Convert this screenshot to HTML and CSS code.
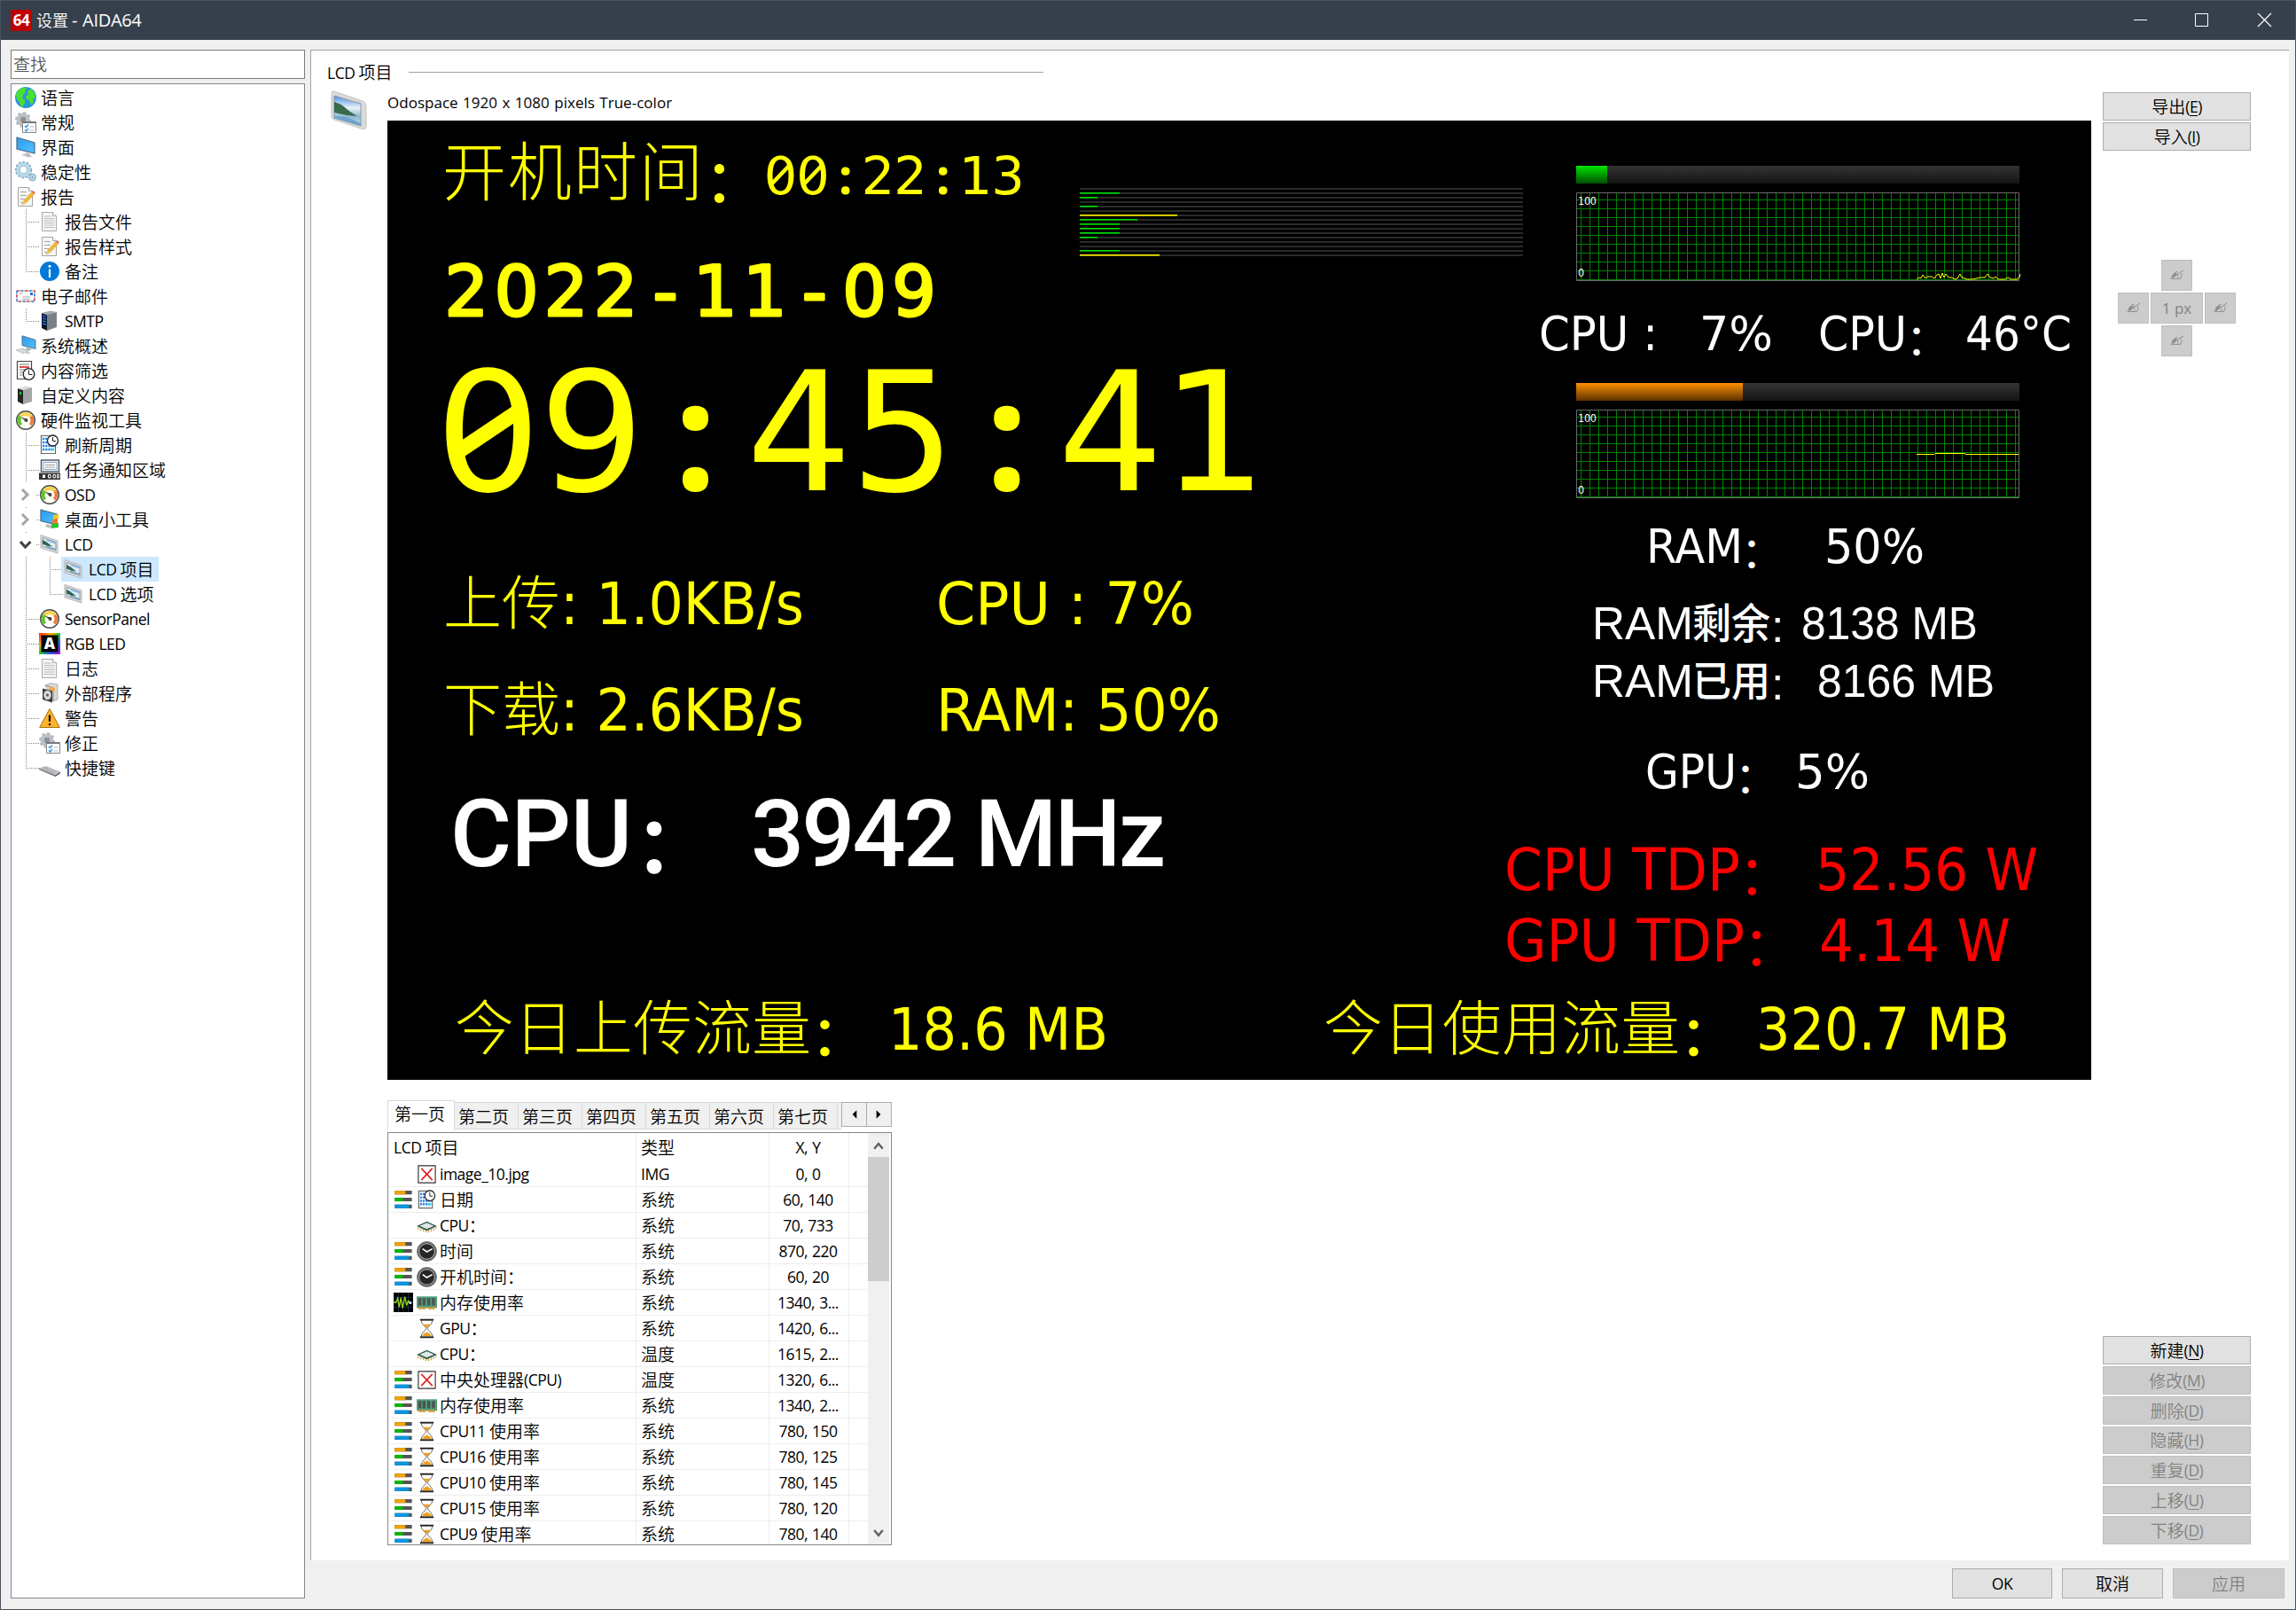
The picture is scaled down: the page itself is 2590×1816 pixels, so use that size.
FILE: index.html
```html
<!DOCTYPE html>
<html lang="zh-CN">
<head>
<meta charset="utf-8">
<title>设置 - AIDA64</title>
<link rel="stylesheet" href="styles.css">
</head>
<body>
<svg class="defs" width="0" height="0">
<defs>
<linearGradient id="gTrack" x1="0" y1="0" x2="0" y2="1"><stop offset="0" stop-color="#343434"/><stop offset="1" stop-color="#141414"/></linearGradient>
<linearGradient id="gGreen" x1="0" y1="0" x2="0" y2="1"><stop offset="0" stop-color="#00e400"/><stop offset="1" stop-color="#005000"/></linearGradient>
<linearGradient id="gOrange" x1="0" y1="0" x2="0" y2="1"><stop offset="0" stop-color="#ff9000"/><stop offset="1" stop-color="#5a3200"/></linearGradient>
<linearGradient id="gRain" x1="0" y1="0" x2="1" y2="1"><stop offset="0" stop-color="#f22"/><stop offset=".3" stop-color="#fa0"/><stop offset=".5" stop-color="#2c2"/><stop offset=".7" stop-color="#26f"/><stop offset="1" stop-color="#a0c"/></linearGradient>
<linearGradient id="gBlue" x1="0" y1="0" x2="1" y2="1"><stop offset="0" stop-color="#2b9cf0"/><stop offset="1" stop-color="#55c0ff"/></linearGradient>
<linearGradient id="gSky" x1="0" y1="0" x2="0" y2="1"><stop offset="0" stop-color="#4a8fe8"/><stop offset=".4" stop-color="#e8f2fb"/><stop offset=".7" stop-color="#8db8d4"/><stop offset="1" stop-color="#c8e0ee"/></linearGradient>
<pattern id="grid" width="10" height="10" patternUnits="userSpaceOnUse"><path d="M5.5 0V10M0 8.5H10" stroke="#008200" fill="none"/></pattern>
<symbol id="globe" viewBox="0 0 24 24"><circle cx="12" cy="12" r="12" fill="#2a97d8"/><path d="M3 4 8 1l5 0-2 3 1 2-3 3-1 4 3 2v3l-3 5-1 0-2-6-3-3-1-5zM14 5l4-3 4 5 1 5-3 1 1 4-3 3-2-5-3-1-1-3 3-2z" fill="#4de02b"/></symbol>
<symbol id="gearlist" viewBox="0 0 24 24"><circle cx="9" cy="9" r="5.500" fill="none" stroke="#bcc1c6" stroke-width="4"/><circle cx="9" cy="9" r="7.800" fill="none" stroke="#b4b9be" stroke-width="2.200" stroke-dasharray="3.200 2.900"/><circle cx="9" cy="9" r="3.400" fill="#8b9198"/><path d="M8.500 11.500h15v12h-15z" fill="#fff" stroke="#858585"/><path d="M8.500 12h15" stroke="#777" stroke-width="2"/><path d="M11 16l1.500 1.500 2.500-3M11 20.500l1.500 1.500 2.500-3" fill="none" stroke="#1a8ff0" stroke-width="1.300"/><path d="M16.500 17h5M16.500 21h5" stroke="#bbb"/></symbol>
<symbol id="monitor" viewBox="0 0 24 24"><path d="M2 1 22 7v12L2 14z" fill="url(#gBlue)" stroke="#4a6b85" stroke-width="1.200"/><path d="M12 18l5 1.500v2l3 1-5 1-8-3 5-1z" fill="#b8bdc2"/></symbol>
<symbol id="gears" viewBox="0 0 24 24"><circle cx="9.500" cy="9.500" r="6.500" fill="none" stroke="#b8d9ea" stroke-width="4.500"/><circle cx="9.500" cy="9.500" r="8.900" fill="none" stroke="#7da5bd" stroke-width="1.500" stroke-dasharray="2.500 2"/><circle cx="9.500" cy="9.500" r="4.200" fill="#fff" stroke="#89aabd" stroke-width=".8"/><circle cx="19.500" cy="18" r="3" fill="#fff" stroke="#9ec3d8" stroke-width="2"/><circle cx="19.500" cy="18" r="4.300" fill="none" stroke="#6b93ab" stroke-width="1" stroke-dasharray="1.500 1.500"/><circle cx="19.500" cy="18" r="1.200" fill="#6b93ab"/></symbol>
<symbol id="doc" viewBox="0 0 24 24"><path d="M3.500 1.500h12l4 4v17h-16z" fill="#f4f4f2" stroke="#a9a9a7"/><path d="M15.500 1.500v4h4" fill="#fff" stroke="#a9a9a7"/><path d="M5.500 6h8M5.500 8.500h12M5.500 11h12M5.500 13.500h12M5.500 16h12M5.500 18.500h12" stroke="#bdbdbb"/></symbol>
<symbol id="report" viewBox="0 0 24 24"><path d="M3.500 1.500h12l4 4v17h-16z" fill="#f6f6f4" stroke="#a3a3a1"/><path d="M15.500 1.500v4h4" fill="#fff" stroke="#a3a3a1"/><path d="M6 6.500h7M6 10.500h7M6 14.500h5M6 18.500h4" stroke="#a5a5a3"/><path d="M8 21l1.500-4L19 6.500l2.500 2.500L12 19z" fill="#f5bb2d" stroke="#c58a18" stroke-width=".6"/><path d="M8 21l1.500-4 2.500 2z" fill="#e8cfa0"/><path d="M19 6.500l1.500-1.500 2.500 2.300-1.500 1.700z" fill="#e86a6a"/></symbol>
<symbol id="info" viewBox="0 0 24 24"><circle cx="12" cy="12" r="11" fill="#0078d7"/><circle cx="12" cy="6.200" r="1.500" fill="#fff"/><path d="M12 9.500v9.500" stroke="#fff" stroke-width="2.200"/></symbol>
<symbol id="mail" viewBox="0 0 24 24"><path d="M2 6h20v12H2z" fill="#fafafa" stroke="#999" stroke-width="1"/><path d="M2 6h20v12H2z" fill="none" stroke="#e33c3c" stroke-width="1.600" stroke-dasharray="2.500 7"/><path d="M2 6h20v12H2z" fill="none" stroke="#2f7fe0" stroke-width="1.600" stroke-dasharray="2.500 7" stroke-dashoffset="-4.500"/><path d="M17 8h3v3h-3z" fill="#2f6fd0"/><path d="M4.500 9h4M9 13h8M8 15.500h9" stroke="#aaa"/></symbol>
<symbol id="server" viewBox="0 0 24 24"><path d="M3 3 9 5v18l-6-3z" fill="#0d1524"/><path d="M3 3 13 .5 20 2 9 5z" fill="#a5a9b0"/><path d="M9 5 20 2v17L9 23z" fill="#7b7f88"/><path d="M4 6l4 1M4 9l4 1M4 12l4 1M4 15l4 1" stroke="#1c6fe8" stroke-width="1.400"/></symbol>
<symbol id="pc" viewBox="0 0 24 24"><path d="M8 .8 23 5.500v10L8 11.500z" fill="url(#gBlue)" stroke="#54748c"/><path d="M14 14l5 2-3 1.500-5-1.500z" fill="#a9afb5"/><path d="M1 17l7-2 7 3-6 2.500z" fill="#d8dbde" stroke="#aab0b5" stroke-width=".7"/><path d="M11 20l4-1 3 1-4 1.500z" fill="#c3c8cc"/></symbol>
<symbol id="filter" viewBox="0 0 24 24"><path d="M2.500 1.500h16v20h-16z" fill="#fff" stroke="#444" stroke-width="1.200"/><path d="M5 5h11" stroke="#777"/><path d="M5 8h11" stroke="#d02020" stroke-width="1.600"/><path d="M5 11h7M5 14h4M5 17h3" stroke="#777"/><circle cx="15.500" cy="16" r="6.300" fill="#fff" stroke="#222" stroke-width="1.300"/><path d="M15.500 11.500V16.500h4" fill="none" stroke="#222"/></symbol>
<symbol id="custom" viewBox="0 0 24 24"><path d="M3 4 9 6v16l-6-3z" fill="#262626"/><path d="M3 4 12 1.500 19 3 9 6z" fill="#dcdcdc"/><path d="M9 6 19 3v16L9 22z" fill="#a5a5a5"/><path d="M6 8v3" stroke="#18d038" stroke-width="2"/></symbol>
<symbol id="gauge" viewBox="0 0 24 24"><circle cx="12" cy="12" r="10.300" fill="#fffdf3" stroke="#4a4a4a" stroke-width="1.400"/><path d="M4.500 6.500A9.200 9.200 0 0 1 19.500 6.500L16.500 9a6 6 0 0 0-9 0z" fill="#f7d354"/><path d="M4.500 6.500A9.200 9.200 0 0 0 5.500 18.500L8 16a6 6 0 0 1-.5-7z" fill="#5cc72e"/><path d="M19.500 6.500A9.200 9.200 0 0 1 18.500 18.500L16 16a6 6 0 0 0 .5-7z" fill="#ee7b3b"/><path d="M6 8.500l8 2.500-1 2.500z" fill="#333"/><circle cx="12.500" cy="12" r="2" fill="#444"/></symbol>
<symbol id="cal" viewBox="0 0 24 24"><path d="M2.500 1.500h16v20h-16z" fill="#fff" stroke="#666" stroke-width="1.200"/><path d="M4 5h8M4 9h8M4 13h13M4 17h13" stroke="#2b86e8" stroke-width="2.600" stroke-dasharray="2.300 .9"/><path d="M13 17h4M16 13h2" stroke="#35d0ee" stroke-width="2.600"/><circle cx="15.500" cy="7" r="6" fill="#fff" stroke="#222" stroke-width="1.300"/><path d="M15.500 3v4.500h3.500" fill="none" stroke="#222"/></symbol>
<symbol id="tray" viewBox="0 0 24 24"><path d="M2.500 1h20v13h-20z" fill="#eef2f6" stroke="#56606c" stroke-width="1.500"/><path d="M5 3.500h15v8H5z" fill="#fff" stroke="#8ba4c4"/><path d="M7 6.500h11M7 9h11" stroke="#999"/><path d="M0 15.500h24V23H0z" fill="#333"/><path d="M4 17.500h3v3.500H4z" fill="#fff"/><path d="M10.500 17.500h2.500v3.500h-2.500zM16 17.500h2.300v3.500H16zM20.500 17.500h2v3.500h-2z" fill="none" stroke="#fff"/></symbol>
<symbol id="gadget" viewBox="0 0 24 24"><path d="M2 1 20 6v12L2 13.500z" fill="url(#gBlue)" stroke="#4a6b85" stroke-width="1.200"/><path d="M9 17l6 2-2 3-6-2z" fill="#b8bdc2"/><path d="M16 7l6-1v5l-6 1z" fill="#f2c81e"/><path d="M15 12l6-1v5l-6 1z" fill="#f0782c"/><path d="M14 17l8-1v5l-8 1z" fill="#25c52f"/></symbol>
<symbol id="lcd" viewBox="0 0 24 24"><path d="M2 1.500 21 8v14L2 16z" fill="#dcdcdc" stroke="#b5b5b5"/><path d="M4 4.500 19 9.500v9.500L4 14z" fill="#dcebf5" stroke="#7d8894" stroke-width=".8"/><path d="M9 6.200l10 3.300v2L9 8z" fill="#7fb2e8"/><path d="M4 7l4 2 7 5.500-5-.5-6-2.500z" fill="#2e6350"/><path d="M8 14.500l11 3" stroke="#5d93b5" stroke-width="1.200"/></symbol>
<symbol id="rgb" viewBox="0 0 24 24"><path d="M0 0h24v24H0z" fill="url(#gRain)"/><path d="M2.500 2.500h19v19h-19z" fill="#000"/></symbol>
<symbol id="box" viewBox="0 0 24 24"><path d="M7 3 13 .5 21 2v17l-5 2z" fill="#d9d9d6" stroke="#999" stroke-width=".7"/><path d="M7 3l9 3v15" fill="none" stroke="#8a8a88"/><circle cx="14.500" cy="8" r="3.500" fill="#f2a64e"/><path d="M4 6.500 15 9.500v13L4 19z" fill="#3b3f44"/><ellipse cx="9.500" cy="14" rx="4.300" ry="5.200" fill="#d4d9de"/><circle cx="9.500" cy="14" r="1.500" fill="#555"/></symbol>
<symbol id="warn" viewBox="0 0 24 24"><path d="M12 1.500 23.300 22.500H.7z" fill="#fcb42c" stroke="#a56f0c" stroke-linejoin="round"/><path d="M12 8.500v7.500M12 18v2.300" stroke="#111" stroke-width="2.200"/></symbol>
<symbol id="keys" viewBox="0 0 24 24"><path d="M0 13l8-2.500L24 17l-6 3.500z" fill="#c5c7ca" stroke="#9a9da0" stroke-width=".6"/><path d="M18 20.500 24 17v1.500L18.500 22 0 14v-1z" fill="#5a5e62"/><path d="M4 13l13 5.500M6.500 12l13 5.500" stroke="#8c9094" stroke-dasharray="1.500 1"/></symbol>
<symbol id="bars" viewBox="0 0 24 24"><path d="M1.500 3.500h21M1.500 12h21M1.500 20.500h21" stroke="#555" stroke-width="4.600"/><path d="M1.500 3.500h13" stroke="#f0a30a" stroke-width="4.600"/><path d="M1.500 12h10" stroke="#0cb40c" stroke-width="4.600"/><path d="M1.500 20.500h17.500" stroke="#0a95e0" stroke-width="4.600"/></symbol>
<symbol id="ximg" viewBox="0 0 24 24"><path d="M2 2h20v20H2z" fill="#fff" stroke="#333" stroke-width="1.200"/><path d="M5.500 5l13 14M18.500 5 5.500 19" stroke="#e02828" stroke-width="1.800"/></symbol>
<symbol id="chip" viewBox="0 0 24 24"><path d="M2 14v3M5 15v3M8 16v3M11 17v3M14 17v3M17 16v3M20 15v3M22.500 14v2" stroke="#c9a24a" stroke-width="1.300"/><path d="M0 12.500 12 7l12 5.500L12 18z" fill="#2e5b49"/><path d="M3.500 12.200 12 8.500l8.500 3.700-8.500 3.600z" fill="#e2e6e4"/></symbol>
<symbol id="clock" viewBox="0 0 24 24"><circle cx="12" cy="12" r="11.300" fill="#2c2c2c" stroke="#8a8a8a" stroke-width="1.200"/><circle cx="12" cy="12" r="9.300" fill="#262626" stroke="#b5b5b5" stroke-width="1.200"/><path d="M7 9l5 3.500L18.500 9" fill="none" stroke="#fff" stroke-width="1.600"/></symbol>
<symbol id="graph" viewBox="0 0 24 24"><path d="M0 0h24v24H0z" fill="#000"/><path d="M0 6h24M0 12h24M0 18h24M6 0v24M12 0v24M18 0v24" stroke="#16324a"/><path d="M0 12h3l2-5 2 11 2-12 2 13 3-14 2 11 2-6 2 2h2" fill="none" stroke="#9ad81e" stroke-width="1.400"/><circle cx="20.500" cy="12.500" r="1.700" fill="#bfe8ff"/></symbol>
<symbol id="ram" viewBox="0 0 24 24"><path d="M0 4.500h24V18H0z" fill="#4f9e78"/><path d="M2 6.500h3.500v8.500H2zM7 6.500h3.500v8.500H7zM12.500 6.500H16v8.500h-3.500zM18 6.500h3.500v8.500H18z" fill="#4c5254"/><path d="M2 17h9v2.500H2zM13.500 17h8v2.500h-8z" fill="#d29a3e"/></symbol>
<symbol id="glass" viewBox="0 0 24 24"><path d="M5.500 2c0 6 5.500 7 5.500 10s-5.500 4-5.500 10h13c0-6-5.500-7-5.500-10s5.500-4 5.500-10z" fill="#fff" stroke="#555"/><path d="M7.500 7h9L12 11.500zM6.500 21c1-3 4-3.500 5.500-5 1.500 1.500 4.500 2 5.500 5z" fill="#eda21c"/><path d="M4 1.700h16M4 22.300h16" stroke="#222" stroke-width="2"/></symbol>
<symbol id="hand" viewBox="0 0 18 14"><path d="M1.500 11.500 16 2M3 8l4-4 2.500-.5" fill="none" stroke="#8a8a86"/><path d="M3 11.500h9.500l1.500-3.500-.5-2.500M8.500 7l2 1.500M9 9.500l1.500 1" fill="none" stroke="#93938f"/><path d="M2.500 10l1.500-3 4-2.500.5 1.500-3 4.500z" fill="#8e8e8a"/></symbol>
</defs>
</svg>

<div class="window">
<header class="titlebar">
<div class="appicon">64</div><div class="title">设置 <span class="en">- AIDA64</span></div>
<svg class="winctl" width="160" height="44" viewBox="0 0 160 44" fill="none" stroke="#fff"><path d="M4 21.500h15M73.500 14.500h14v14h-14z"/><path d="M144 14l15 15M159 14l-15 15" stroke-width="1.200"/></svg>
</header>
<div class="body">
<aside class="side">
<div class="search">查找</div>
<div class="tree">
<div class="row"><div class="label"><svg><use href="#globe"/></svg>语言</div></div>
<div class="row"><div class="label"><svg><use href="#gearlist"/></svg>常规</div></div>
<div class="row"><div class="label"><svg><use href="#monitor"/></svg>界面</div></div>
<div class="row"><div class="label"><svg><use href="#gears"/></svg>稳定性</div></div>
<div class="row"><div class="label"><svg><use href="#report"/></svg>报告</div></div>
<div class="row"><i class="g v h"></i><div class="label"><svg><use href="#doc"/></svg>报告文件</div></div>
<div class="row"><i class="g v h"></i><div class="label"><svg><use href="#report"/></svg>报告样式</div></div>
<div class="row"><i class="g v h last"></i><div class="label"><svg><use href="#info"/></svg>备注</div></div>
<div class="row"><div class="label"><svg><use href="#mail"/></svg>电子邮件</div></div>
<div class="row"><i class="g v h last"></i><div class="label"><svg><use href="#server"/></svg><span class="en">SMTP</span></div></div>
<div class="row"><div class="label"><svg><use href="#pc"/></svg>系统概述</div></div>
<div class="row"><div class="label"><svg><use href="#filter"/></svg>内容筛选</div></div>
<div class="row"><div class="label"><svg><use href="#custom"/></svg>自定义内容</div></div>
<div class="row"><div class="label"><svg><use href="#gauge"/></svg>硬件监视工具</div></div>
<div class="row"><i class="g v h"></i><div class="label"><svg><use href="#cal"/></svg>刷新周期</div></div>
<div class="row"><i class="g v h"></i><div class="label"><svg><use href="#tray"/></svg>任务通知区域</div></div>
<div class="row"><svg class="tw" viewBox="0 0 27 28"><path d="M8 8l6 6-6 6" stroke="#a6a6a6"/><path d="M24 14.500h3" class="dot"/></svg><div class="label"><svg><use href="#gauge"/></svg><span class="en">OSD</span></div></div>
<div class="row"><svg class="tw" viewBox="0 0 27 28"><path d="M8 8l6 6-6 6" stroke="#a6a6a6"/><path d="M24 14.500h3M12.500 0v2" class="dot"/></svg><div class="label"><svg><use href="#gadget"/></svg>桌面小工具</div></div>
<div class="row"><svg class="tw" viewBox="0 0 27 28"><path d="M6 11l5.500 6 6-6" stroke="#404040"/><path d="M24 14.500h3M12.500 0v2" class="dot"/></svg><div class="label"><svg><use href="#lcd"/></svg><span class="en">LCD</span></div></div>
<div class="row"><i class="g v"></i><i class="g v h"></i><div class="label sel"><svg><use href="#lcd"/></svg><span class="en">LCD</span> 项目</div></div>
<div class="row"><i class="g v"></i><i class="g v h last"></i><div class="label"><svg><use href="#lcd"/></svg><span class="en">LCD</span> 选项</div></div>
<div class="row"><i class="g v h"></i><div class="label"><svg><use href="#gauge"/></svg><span class="en">SensorPanel</span></div></div>
<div class="row"><i class="g v h"></i><div class="label"><span class="rgb"><svg><use href="#rgb"/></svg><b>A</b></span><span class="en">RGB LED</span></div></div>
<div class="row"><i class="g v h"></i><div class="label"><svg><use href="#doc"/></svg>日志</div></div>
<div class="row"><i class="g v h"></i><div class="label"><svg><use href="#box"/></svg>外部程序</div></div>
<div class="row"><i class="g v h"></i><div class="label"><svg><use href="#warn"/></svg>警告</div></div>
<div class="row"><i class="g v h"></i><div class="label"><svg><use href="#gearlist"/></svg>修正</div></div>
<div class="row"><i class="g v h last"></i><div class="label"><svg><use href="#keys"/></svg>快捷键</div></div>
</div>
</aside>

<div class="content">
<main class="panel">
<div class="main">
<div class="heading"><span><span class="en">LCD</span> 项目</span><hr></div>
<div class="work">
<svg class="pageicon" viewBox="0 0 42 46"><path d="M4 1 Q1 0 1 4V29q0 3 3 4L34 43q6 2 6-2V17q0-3-4-5z" fill="#dadada" stroke="#c4c4c4"/><path d="M4 6 34 15v25L4 31z" fill="url(#gSky)" stroke="#8b97a3"/><path d="M4 13l8 3 10 8 8 5-12-1-14-3z" fill="#39694c"/><path d="M4 29l14 1 16 7v3L4 31z" fill="#6fa3cc"/></svg>
<div class="stack">
<div class="device en">Odospace 1920 x 1080 pixels True-color</div>
<svg class="lcd" width="1922" height="1082" viewBox="437 136 1922 1082">
<path d="M437 136h1922v1082H437z" fill="#000"/>
<g class="y">
<text class="cjk" font-size="72" x="499" y="220" textLength="294">开机时间</text><text class="cjk colon" font-size="66" x="795" y="228">：</text>
<text class="num" font-size="59" y="219" x="880.500 917.100 953.800 990.500 1027.100 1063.800 1100.400 1137.100">00<tspan class="dots s">:</tspan>22<tspan class="dots s">:</tspan>13</text>
<path class="slash" d="M870 208 891 186M906.600 208 927.600 186" stroke-width="4.500"/>
<text class="num date" font-size="78" y="355.500" x="526.400 582.500 638.500 694.600 750.700 806.800 862.800 918.900 975 1031">2022-11-09</text>
<text class="num" font-size="187" y="553" x="550.400 667.500 784.500 901.600 1018.600 1135.700 1252.700 1369.800">09<tspan class="dots">:</tspan>45<tspan class="dots">:</tspan>41</text>
<path class="slash" d="M519 508 583 465" stroke-width="17"/>
<text class="cjk" font-size="66" x="500" y="704" textLength="132">上传</text><text font-size="66.700" x="632" y="704" textLength="275" lengthAdjust="spacingAndGlyphs">: 1.0KB/s</text>
<text font-size="66.700" x="1056" y="704" textLength="291" lengthAdjust="spacingAndGlyphs">CPU : 7%</text>
<text class="cjk" font-size="66" x="500" y="824" textLength="132">下载</text><text font-size="66.700" x="632" y="824" textLength="275" lengthAdjust="spacingAndGlyphs">: 2.6KB/s</text>
<text font-size="66.700" x="1056" y="824" textLength="321" lengthAdjust="spacingAndGlyphs">RAM: 50%</text>
<text class="cjk" font-size="66.700" x="513" y="1184" textLength="402">今日上传流量</text><text class="cjk colon" font-size="62" x="915" y="1191">：</text><text font-size="66.700" x="1002" y="1184" textLength="248" lengthAdjust="spacingAndGlyphs">18.6 MB</text>
<text class="cjk" font-size="66.700" x="1493" y="1184" textLength="402">今日使用流量</text><text class="cjk colon" font-size="62" x="1895" y="1191">：</text><text font-size="66.700" x="1981" y="1184" textLength="286" lengthAdjust="spacingAndGlyphs">320.7 MB</text>
</g>
<g class="w">
<text class="din" font-size="106" x="508" y="977" textLength="205">CPU</text><text class="cjk" font-size="88" font-weight="700" x="716" y="984">：</text><text class="din" font-size="106" x="847" y="977" textLength="468">3942 MHz</text>
<text font-size="53.300" x="1736" y="395" textLength="134" lengthAdjust="spacingAndGlyphs">CPU :</text><text font-size="53.300" x="1917" y="395" textLength="83" lengthAdjust="spacingAndGlyphs">7%</text>
<text font-size="53.300" x="2051" y="395" textLength="100" lengthAdjust="spacingAndGlyphs">CPU</text><text class="cjk colon" font-size="48" x="2150" y="400">：</text><text font-size="53.300" x="2217" y="395" textLength="120" lengthAdjust="spacingAndGlyphs">46°C</text>
<text font-size="53.300" x="1857" y="635" textLength="109" lengthAdjust="spacingAndGlyphs">RAM</text><text class="cjk colon" font-size="48" x="1964" y="640">：</text><text font-size="53.300" x="2058" y="635" textLength="113" lengthAdjust="spacingAndGlyphs">50%</text>
<text class="ar" font-size="52" x="1796" y="721" textLength="114" lengthAdjust="spacingAndGlyphs">RAM</text><text class="cjk" font-size="47" font-weight="500" x="1909" y="720" textLength="88" lengthAdjust="spacingAndGlyphs">剩余</text><text class="ar" font-size="52" x="1998" y="724">:</text><text class="ar" font-size="52" x="2032" y="721" textLength="199" lengthAdjust="spacingAndGlyphs">8138 MB</text>
<text class="ar" font-size="52" x="1796" y="785.500" textLength="114" lengthAdjust="spacingAndGlyphs">RAM</text><text class="cjk" font-size="47" font-weight="500" x="1909" y="785" textLength="88" lengthAdjust="spacingAndGlyphs">已用</text><text class="ar" font-size="52" x="1998" y="789">:</text><text class="ar" font-size="52" x="2050" y="785.500" textLength="200" lengthAdjust="spacingAndGlyphs">8166 MB</text>
<text font-size="53.300" x="1856" y="889" textLength="103" lengthAdjust="spacingAndGlyphs">GPU</text><text class="cjk colon" font-size="48" x="1957" y="894">：</text><text font-size="53.300" x="2025" y="889" textLength="84" lengthAdjust="spacingAndGlyphs">5%</text>
</g>
<g class="r">
<text font-size="66.700" x="1697" y="1004" textLength="266" lengthAdjust="spacingAndGlyphs">CPU TDP</text><text class="cjk colon" font-size="62" x="1961" y="1010">：</text><text font-size="66.700" x="2048" y="1004" textLength="251" lengthAdjust="spacingAndGlyphs">52.56 W</text>
<text font-size="66.700" x="1697" y="1083.500" textLength="271" lengthAdjust="spacingAndGlyphs">GPU TDP</text><text class="cjk colon" font-size="62" x="1966" y="1090">：</text><text font-size="66.700" x="2052" y="1083.500" textLength="216" lengthAdjust="spacingAndGlyphs">4.14 W</text>
</g>
<g fill="none">
<path d="M1218 213h500M1218 218h500M1218 223h500M1218 228h500M1218 233h500M1218 238h500M1218 243h500M1218 248h500M1218 253h500M1218 258h500M1218 263h500M1218 268h500M1218 273h500M1218 278h500M1218 283h500M1218 288h500" stroke="#2a2a2a" stroke-width="2"/>
<path d="M1218 217.500h45M1218 222.500h20M1218 232.500h20M1218 247.500h65M1218 252.500h45M1218 257.500h45M1218 262.500h45M1218 267.500h20M1218 282.500h45" stroke="#00e000"/>
<path d="M1218 218.500h45M1218 223.500h20M1218 233.500h20M1218 248.500h65M1218 253.500h45M1218 258.500h45M1218 263.500h45M1218 268.500h20M1218 283.500h45" stroke="#009000"/>
<path d="M1218 242.500h110M1218 287.500h90" stroke="#fcf400"/><path d="M1218 243.500h110M1218 288.500h90" stroke="#a8a000"/>
</g>
<path d="M1778 187h500v20h-500z" fill="url(#gTrack)"/>
<path d="M1778 432h500v20h-500z" fill="url(#gTrack)"/>
<path d="M1778 187h35v20h-35z" fill="url(#gGreen)"/>
<path d="M1778 432h188v20h-188z" fill="url(#gOrange)"/>
<g transform="translate(1778 217)"><path d="M0 0h500v100H0z" fill="url(#grid)"/><path d="M.5.5h499v99H.5z" fill="none" stroke="#6a6a6a"/>
<path d="M384 98l3-2 2 1 2-4 3 4 2-2h5l3 2 3-4 2-1 2 5 2-6 2 5 2-4 3 4 4 0 3 2 3-1 3-5 2 4 3 1 3 1 6 0 5-1 4-1 5 0 3-4 3 4 4 1 2-2 3 3h8l3-2 4 2h6l3-2 1-4" fill="none" stroke="#ff0"/>
<text class="lab" x="2" y="14" textLength="21">100</text><text class="lab" x="2" y="95">0</text></g>
<g transform="translate(1778 462)"><path d="M0 0h500v100H0z" fill="url(#grid)"/><path d="M.5.5h499v99H.5z" fill="none" stroke="#6a6a6a"/>
<path d="M384 50.500h20l1-1h33l2 1h59" fill="none" stroke="#ff0"/>
<text class="lab" x="2" y="14" textLength="21">100</text><text class="lab" x="2" y="95">0</text></g>
</svg>

<div class="lists">
<div class="tabs"><div class="tab on">第一页</div><div class="tab">第二页</div><div class="tab">第三页</div><div class="tab">第四页</div><div class="tab">第五页</div><div class="tab">第六页</div><div class="tab">第七页</div><div class="cut"></div>
<div class="spin"><svg viewBox="0 0 28 28"><path d="M17 9v10l-5-5z"/></svg><svg viewBox="0 0 28 28"><path d="M11 9v10l5-5z"/></svg></div></div>
<div class="list">
<div class="rows">
<div class="tr th"><div class="c1"><span class="en">LCD</span> 项目</div><div>类型</div><div class="en">X, Y</div></div>
<div class="tr"><div class="c1"><svg></svg><svg><use href="#ximg"/></svg><span class="en">image_10.jpg</span></div><div class="en">IMG</div><div class="en">0, 0</div></div>
<div class="tr"><div class="c1"><svg><use href="#bars"/></svg><svg><use href="#cal"/></svg>日期</div><div>系统</div><div class="en">60, 140</div></div>
<div class="tr"><div class="c1"><svg></svg><svg><use href="#chip"/></svg><span class="en">CPU</span>：</div><div>系统</div><div class="en">70, 733</div></div>
<div class="tr"><div class="c1"><svg><use href="#bars"/></svg><svg><use href="#clock"/></svg>时间</div><div>系统</div><div class="en">870, 220</div></div>
<div class="tr"><div class="c1"><svg><use href="#bars"/></svg><svg><use href="#clock"/></svg>开机时间：</div><div>系统</div><div class="en">60, 20</div></div>
<div class="tr"><div class="c1"><svg><use href="#graph"/></svg><svg><use href="#ram"/></svg>内存使用率</div><div>系统</div><div class="en">1340, 3...</div></div>
<div class="tr"><div class="c1"><svg></svg><svg><use href="#glass"/></svg><span class="en">GPU</span>：</div><div>系统</div><div class="en">1420, 6...</div></div>
<div class="tr"><div class="c1"><svg></svg><svg><use href="#chip"/></svg><span class="en">CPU</span>：</div><div>温度</div><div class="en">1615, 2...</div></div>
<div class="tr"><div class="c1"><svg><use href="#bars"/></svg><svg><use href="#ximg"/></svg>中央处理器<span class="en">(CPU)</span></div><div>温度</div><div class="en">1320, 6...</div></div>
<div class="tr"><div class="c1"><svg><use href="#bars"/></svg><svg><use href="#ram"/></svg>内存使用率</div><div>系统</div><div class="en">1340, 2...</div></div>
<div class="tr"><div class="c1"><svg><use href="#bars"/></svg><svg><use href="#glass"/></svg><span class="en">CPU11</span> 使用率</div><div>系统</div><div class="en">780, 150</div></div>
<div class="tr"><div class="c1"><svg><use href="#bars"/></svg><svg><use href="#glass"/></svg><span class="en">CPU16</span> 使用率</div><div>系统</div><div class="en">780, 125</div></div>
<div class="tr"><div class="c1"><svg><use href="#bars"/></svg><svg><use href="#glass"/></svg><span class="en">CPU10</span> 使用率</div><div>系统</div><div class="en">780, 145</div></div>
<div class="tr"><div class="c1"><svg><use href="#bars"/></svg><svg><use href="#glass"/></svg><span class="en">CPU15</span> 使用率</div><div>系统</div><div class="en">780, 120</div></div>
<div class="tr"><div class="c1"><svg><use href="#bars"/></svg><svg><use href="#glass"/></svg><span class="en">CPU9</span> 使用率</div><div>系统</div><div class="en">780, 140</div></div>
</div>
<div class="scroll"><svg viewBox="0 0 25 27"><path d="M7.500 18l5-6 5 6"/></svg><div class="thumb"></div><svg class="down" viewBox="0 0 25 27"><path d="M7.500 11l5 6 5-6"/></svg></div>
</div>
</div>
</div>
</div>
</div>

<div class="actions">
<div class="group"><div class="btn">导出<span class="en">(<u>E</u>)</span></div><div class="btn">导入<span class="en">(<u>I</u>)</span></div></div>
<div class="pad">
<div class="btn off sq"><svg><use href="#hand"/></svg></div>
<div class="mid"><div class="btn off sq"><svg><use href="#hand"/></svg></div><div class="btn off px">1 px</div><div class="btn off sq"><svg><use href="#hand"/></svg></div></div>
<div class="btn off sq"><svg><use href="#hand"/></svg></div>
</div>
<div class="group bottom"><div class="btn">新建<span class="en">(<u>N</u>)</span></div><div class="btn off">修改<span class="en">(<u>M</u>)</span></div><div class="btn off">删除<span class="en">(<u>D</u>)</span></div><div class="btn off short">隐藏<span class="en">(<u>H</u>)</span></div><div class="btn off">重复<span class="en">(<u>D</u>)</span></div><div class="btn off">上移<span class="en">(<u>U</u>)</span></div><div class="btn off">下移<span class="en">(<u>D</u>)</span></div></div>
</div>
</main>
<footer class="foot"><div class="btn ok"><span class="en">OK</span></div><div class="btn cancel">取消</div><div class="btn off apply">应用</div></footer>
</div>
</div>
</div>
</body>
</html>
```
FILE: styles.css
```css
* { box-sizing: border-box; }
body { margin: 0; background: #f0f0f0; color: #000; font: 19px/28px "Noto Sans CJK SC", sans-serif; font-weight: 350; }
.defs { display: block; height: 0; position: absolute; }
.en { font-family: "Open Sans", "Noto Sans", sans-serif; font-size: 17.5px; letter-spacing: -0.5px; word-spacing: 1px; font-weight: 400; }

.window { width: 2590px; height: 1816px; border: 1px solid #47535f; display: flex; flex-direction: column; background: #f0f0f0; }
.titlebar { height: 44px; background: #35404c; color: #fff; display: flex; align-items: center; padding-left: 11px; gap: 5px; flex: none; }
.title { font-size: 18px; padding-bottom: 2px; }
.title .en { font-size: 20px; letter-spacing: -0.3px; }
.appicon { width: 24px; height: 24px; background: #c00000; font: bold 17px/24px "Open Sans", sans-serif; text-align: center; letter-spacing: -0.5px; }
.winctl { margin: 0 26px 0 auto; }

.body { flex: 1; display: flex; gap: 6px; padding: 10px 7px 0 11px; min-height: 0; }
.side { width: 332px; display: flex; flex-direction: column; gap: 5px; padding: 1px 0 12px; }
.search { height: 33px; border: 1px solid #7a7a7a; background: #fff; color: #5a5a5a; padding-left: 2px; line-height: 29px; flex: none; }
.tree { flex: 1; border: 1px solid #828790; background: #fff; padding: 1px 0 0 4px; }
.row { display: flex; height: 28px; }
.label { display: flex; align-items: center; height: 28px; line-height: 26px; padding-bottom: 1px; white-space: pre; }
.label > svg, .rgb { width: 24px; height: 24px; margin-right: 5px; flex: none; }
.label.sel { background: #cce8ff; margin-left: -2px; padding: 0 5px 1px 2px; }
.rgb { display: grid; place-items: center; }
.rgb > * { grid-area: 1 / 1; }
.rgb svg { width: 24px; height: 24px; }
.rgb b { color: #fff; font: 900 17px/24px "Open Sans", sans-serif; }
.g { width: 27px; height: 28px; flex: none; background-repeat: no-repeat; }
.g.v { background-image: repeating-linear-gradient(#888 0 1px, transparent 1px 2px); background-size: 1px 28px; background-position: 12px 0; }
.g.v.h { background-image: repeating-linear-gradient(#888 0 1px, transparent 1px 2px), repeating-linear-gradient(90deg, #888 0 1px, transparent 1px 2px); background-size: 1px 28px, 15px 1px; background-position: 12px 0, 12px 14px; }
.g.v.h.last { background-size: 1px 15px, 15px 1px; }
.tw { width: 27px; height: 28px; fill: none; stroke-width: 3; }
.dot { stroke: #888; stroke-width: 1; stroke-dasharray: 1 1; }

.content { flex: 1; display: flex; flex-direction: column; min-width: 0; padding-top: 1px; }
.panel { height: 1704px; background: #fff; border: 1px solid #a0a0a0; border-right: 0; border-bottom: 0; display: flex; justify-content: space-between; padding: 0 43px 0 18px; }
.main { width: 1990px; padding-top: 10px; }
.heading { display: flex; align-items: center; gap: 18px; height: 29px; padding-bottom: 1px; }
.heading > span { white-space: pre; line-height: 26px; }
.heading hr { width: 716px; border: 0; border-top: 1px solid #a0a0a0; margin: 0; }
.work { display: flex; }
.pageicon { width: 42px; height: 46px; margin: 6px 22px 0 4px; flex: none; }
.stack { width: 1922px; }
.device { height: 40px; line-height: 39px; font-size: 17px; letter-spacing: 0.02px; }
.lcd { display: block; font-weight: 400; }
.lcd text { font-family: "DejaVu Sans Condensed", "DejaVu Sans", sans-serif; font-stretch: condensed; white-space: pre; }
.lcd text.cjk { font-family: "Noto Sans CJK SC", sans-serif; font-stretch: normal; }
.lcd .y text.cjk { font-weight: 300; }
.lcd text.cjk.colon { font-weight: 400; }
.lcd .y text.cjk.colon { font-weight: 500; }
.lcd text.num { font-family: "DejaVu Sans", sans-serif; font-stretch: normal; text-anchor: middle; }
.lcd text.date { stroke: #ff0; stroke-width: 3px; stroke-linejoin: round; }
.dots { font-family: "Open Sans", sans-serif; font-weight: 700; font-size: 170px; }
.dots.s { font-size: 56px; }
.lcd text.din { font-family: Roboto, sans-serif; font-weight: 500; font-stretch: normal; }
.lcd text.ar { font-family: "Liberation Sans", sans-serif; font-stretch: normal; }
.lcd text.lab { font-size: 12.5px; fill: #fff; }
.y { fill: #ff0; }
.w { fill: #fff; }
.r { fill: #f00; }
.slash { stroke: #ff0; fill: none; }

.lists { width: 569px; padding-top: 23px; }
.tabs { display: flex; align-items: flex-start; height: 36px; padding-top: 2px; }
.tab { width: 72px; height: 31px; background: #f0f0f0; border: 1px solid #d9d9d9; border-left: 0; padding-left: 4px; line-height: 29px; white-space: nowrap; }
.tab.on { width: 76px; height: 34px; margin-top: -2px; background: #fff; border: 1px solid #d9d9d9; border-bottom: 0; padding-left: 7px; line-height: 28px; }
.cut { width: 4px; height: 31px; background: #f0f0f0; border: solid #d9d9d9; border-width: 1px 0; }
.spin { display: flex; width: 57px; margin-left: auto; }
.spin svg { width: 29px; height: 28px; background: #f0f0f0; border: 1px solid #adadad; margin-right: -1px; flex: none; }
.list { height: 466px; border: 1px solid #828790; display: flex; justify-content: space-between; padding: 0 2px 0 1px; }
.rows { width: 540px; height: 464px; overflow: hidden; }
.tr { display: grid; grid-template-columns: 279px 150px 90px 21px; height: 29px; border-bottom: 1px solid #ededed; line-height: 28px; }
.tr > div { border-right: 1px solid #ededed; padding-left: 5px; white-space: pre; }
.tr > div:nth-child(3) { text-align: center; padding: 0 2px 0 0; }
.tr .c1 { display: flex; align-items: center; }
.c1 svg { width: 22px; height: 22px; margin-right: 5px; flex: none; }
.c1 svg + svg { width: 23px; height: 23px; margin: 0 3px 0 -1px; }
.th { height: 32px; border: 0; line-height: 32px; }
.scroll { width: 24px; background: #f0f0f0; display: flex; flex-direction: column; }
.scroll svg { width: 24px; height: 27px; fill: none; stroke: #606060; stroke-width: 2.5; }
.thumb { height: 140px; background: #cdcdcd; }
.scroll .down { margin-top: auto; }

.actions { width: 167px; display: flex; flex-direction: column; padding: 47px 0 18px; }
.group { display: flex; flex-direction: column; gap: 2px; }
.btn { height: 32px; border: 1px solid #adadad; background: #e1e1e1; display: flex; align-items: center; justify-content: center; white-space: pre; padding-bottom: 1px; }
.btn u { text-underline-offset: 3px; text-decoration-thickness: 1px; }
.btn.off { background: #ccc; border-color: #bfbfbf; color: #838383; }
.btn.short { height: 31px; }
.pad { display: flex; flex-direction: column; align-items: center; gap: 2px; margin-top: 123px; }
.mid { display: flex; gap: 2px; }
.btn.sq { width: 35px; height: 35px; }
.sq svg { width: 18px; height: 14px; }
.btn.px { width: 59px; height: 35px; font: 17px "Open Sans", sans-serif; }
.bottom { margin-top: auto; }
.foot { display: flex; justify-content: flex-end; gap: 11px; padding: 9px 5px 0 0; }
.foot .btn { height: 34px; }
.ok { width: 113px; }
.cancel { width: 114px; }
.apply { width: 126px; }
```
